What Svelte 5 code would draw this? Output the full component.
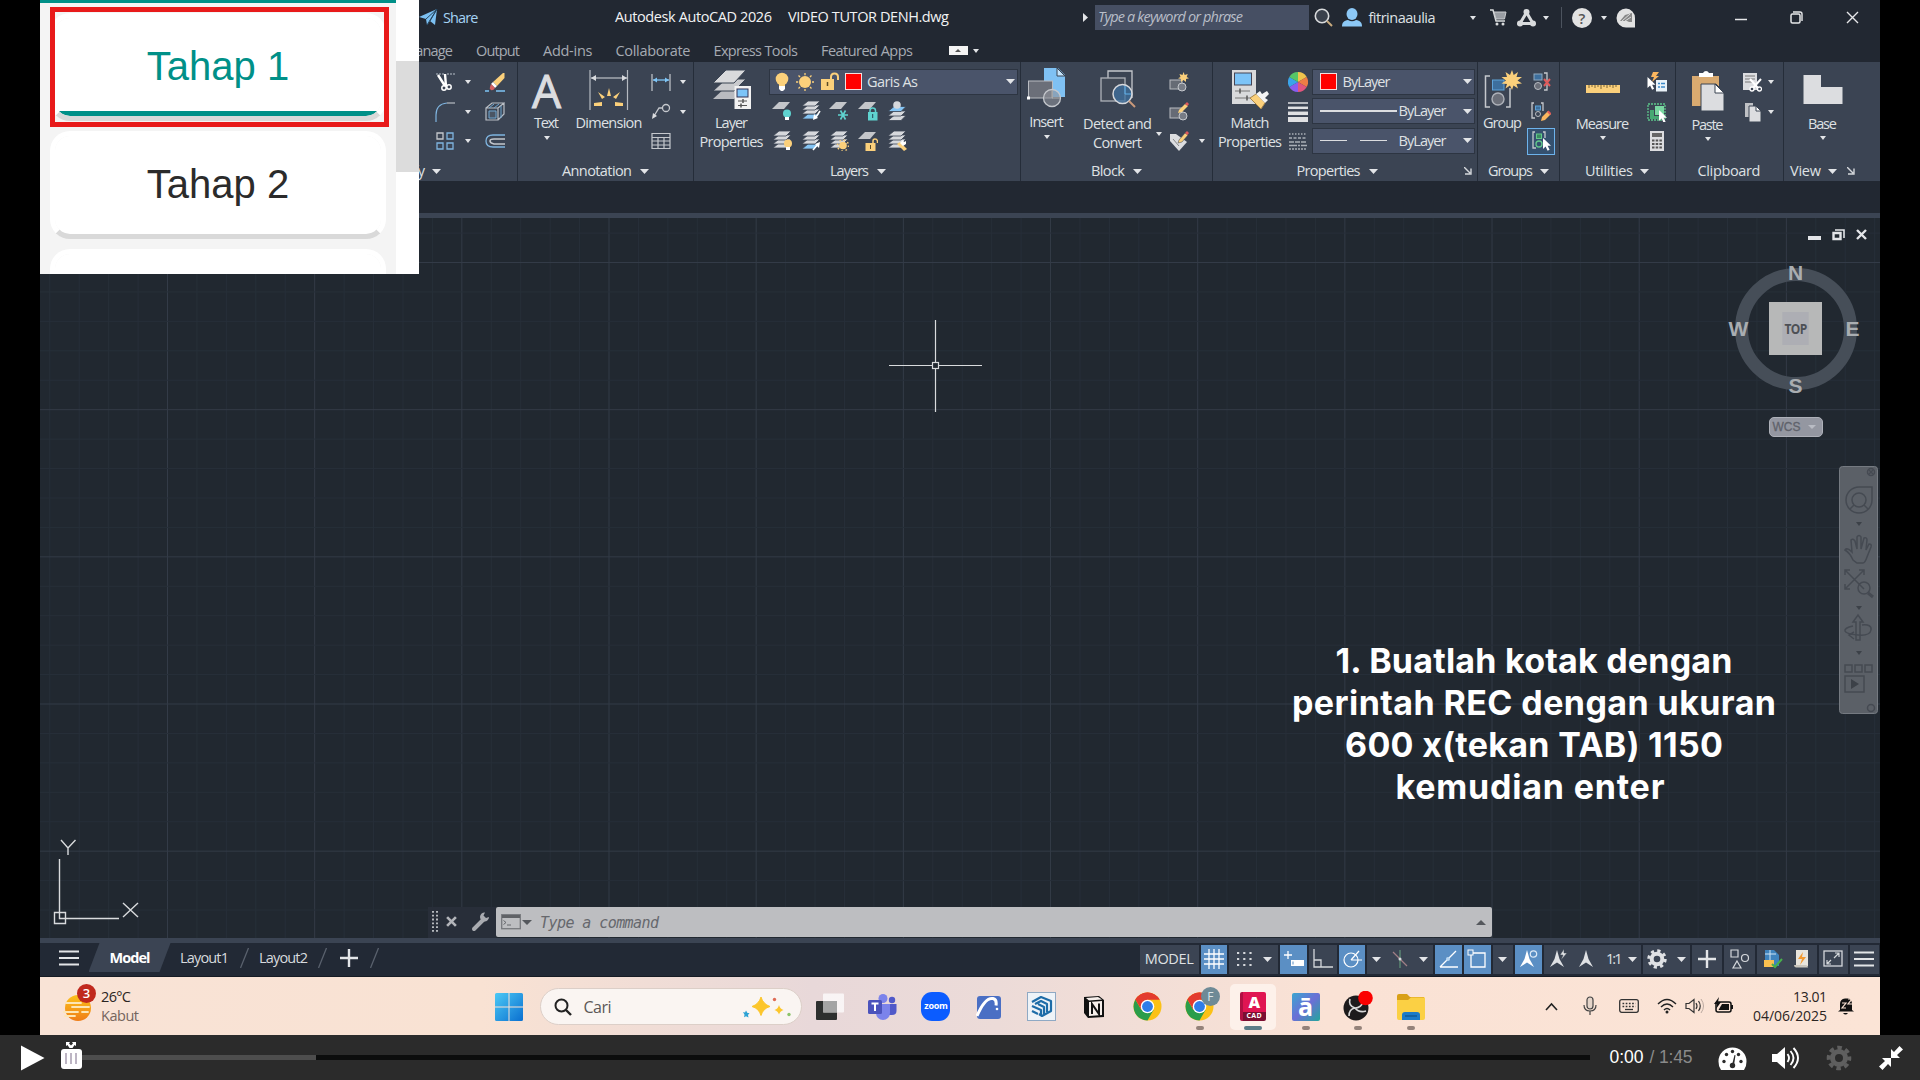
<script>
  // Spreads the letters of a label so that it fills the given width.
  function fit(node, width) {
    const n = node.textContent.length;
    const natural = node.getBoundingClientRect().width;
    const gap = (width - natural) / Math.max(1, n - 1);
    node.style.letterSpacing = gap + 'px';
    node.style.marginRight = -gap + 'px';
  }

  const sheet = (y, c = '#d6d8dc') => `<path d="M7 ${y}h12l-5 5H1z" fill="${c}" stroke="#3b4453" stroke-width=".8"/>`;
  const cursor = (x, y) => `<path d="M${x} ${y}v11l2.6-2.4 2 4.2 2-1-2-4h3.4z" fill="#fff"/>`;
  const mast = 'M9 1L6.5 10L2 18L9 13.5L16 18L11.500 10z';
  const chrome = '<circle cx="14.500" cy="14.500" r="14" fill="#fbc116"/><path d="M14.500 14.500L2.400 7.500A14 14 0 0 1 26.600 7.500H14.500z" fill="#e33b2e"/><path d="M2.400 7.500A14 14 0 0 0 14.500 28.500L20.500 18 8.400 18z" fill="#2a9d4a"/><path d="M14.500 7.500H26.600A14 14 0 0 0 2.400 7.500L8.500 18z" fill="#e33b2e"/><circle cx="14.500" cy="14.500" r="6.800" fill="#fff"/><circle cx="14.500" cy="14.500" r="5.400" fill="#2f7de9"/>';

  // name: [width, height, markup]
  const icons = {
    plane: [19, 17, '<path d="M0 8L18 0 16 16 11 12 8 16 7 10z" fill="#7cc0f2"/><path d="M7 10L18 0 8 16M11 12L18 0" stroke="#25455f" stroke-width="1" fill="none"/>'],
    right: [5, 9, '<path d="M0 0l5 4.500-5 4.500z" fill="#e3e5e8"/>'],
    tri: [6, 4, '<path d="M0 0h6L3 4z" fill="#e3e5e8"/>'],
    big: [9, 5, '<path d="M0 0h9L4.500 5z" fill="#e3e5e8"/>'],
    mag: [19, 19, '<circle cx="8" cy="8" r="6.700" fill="#3a414c" stroke="#d9dbdd" stroke-width="1.600"/><path d="M13 13l5 5" stroke="#c9ab7f" stroke-width="2"/>'],
    user: [20, 19, '<ellipse cx="10" cy="6" rx="5.500" ry="6" fill="#8cc8f6"/><path d="M0 18.500c0-4 2-6 6-6.500q4 2.500 8 0c4 .5 6 2.500 6 6.500z" fill="#8cc8f6"/>'],
    cart: [17, 17, '<path d="M0 1h3l3 11h9" stroke="#d9dbdd" stroke-width="1.500" fill="none"/><path d="M4 3h12l-1.500 7H6z" fill="#9a9ea4" stroke="#c9cbce"/><circle cx="7" cy="15" r="1.500" fill="#d9dbdd"/><circle cx="13" cy="15" r="1.500" fill="#d9dbdd"/>'],
    net: [19, 18, '<path d="M9.500 3.500L3 14.500h13z" fill="none" stroke="#d9dbdd" stroke-width="3"/><circle cx="9.500" cy="3" r="3" fill="#d9dbdd"/><circle cx="3" cy="14.500" r="3" fill="#d9dbdd"/><circle cx="16" cy="14.500" r="3" fill="#d9dbdd"/>'],
    bubble: [20, 20, '<path d="M10 .5a9.500 9.500 0 0 1 9 9.500v9.500h-9a9.500 9.500 0 0 1 0-19z" fill="#e2e2e2"/><path d="M4 13l5-6 7-2v9h-3l-2-1H7z" fill="#888"/><path d="M6 13l8-7M9 13l6-4" stroke="#ddd"/>'],
    min: [12, 14, '<path d="M0 8.500h12" stroke="#e6e7e9" stroke-width="1.500"/>'],
    restore: [13, 13, '<rect x="1" y="3" width="9" height="9" rx="1.500" fill="none" stroke="#e6e7e9" stroke-width="1.500"/><path d="M3 1h7q2 0 2 2v7" fill="none" stroke="#e6e7e9" stroke-width="1.400"/>'],
    close: [13, 13, '<path d="M1 1l11 11M12 1L1 12" stroke="#e6e7e9" stroke-width="1.400"/>'],

    trim: [20, 20, '<path d="M1 2h9M12 2h8" stroke="#8e97a3" stroke-width="1.300" stroke-dasharray="2 1"/><path d="M3 3l7 11M10 2l1 12" stroke="#fff" stroke-width="2.400"/><circle cx="9" cy="16" r="2.200" fill="none" stroke="#fff" stroke-width="1.500"/><circle cx="14" cy="15" r="2.200" fill="none" stroke="#fff" stroke-width="1.500"/>'],
    erase: [20, 20, '<path d="M8 10L18 1h1.500v5L12 14z" fill="#fbd07b"/><path d="M8 10l4 4-2 2-4-4z" fill="#fff"/><path d="M6 12l4 4q-2 3-4 2t-1-3z" fill="#d66060"/><path d="M0 19h4M11 19h9" stroke="#7fc4f5" stroke-width="1.300"/>'],
    fillet: [20, 20, '<path d="M1 20V13Q1 2 12 1" fill="none" stroke="#7fb4df" stroke-width="1.200"/><path d="M12 1h8" stroke="#b9bec5" stroke-width="1.200"/>'],
    cube: [20, 20, '<path d="M1 6h12v12H1zM1 6l6-5h12l-6 5M19 1v11l-6 6" fill="none" stroke="#b9bec5" stroke-width="1.200"/><path d="M4 6l5-4M9 6l5-4M16 4v12" stroke="#6fa6d0"/><path d="M4 9h7v7H4z" fill="#4a5564" stroke="#6fa6d0"/>'],
    array: [20, 20, '<path d="M2 2h6v6H2z" fill="none" stroke="#c5c8cd" stroke-width="1.300"/><path d="M12 2h6v6h-6zM2 12h6v6H2zM12 12h6v6h-6z" fill="none" stroke="#7fb4df" stroke-width="1.300"/>'],
    offset: [20, 20, '<path d="M20 4H8Q1 4 1 10t7 6h12" fill="none" stroke="#7fb4df" stroke-width="1.300"/><path d="M20 8H9Q5 8 5 10t4 3h11" fill="none" stroke="#c5c8cd" stroke-width="1.500"/>'],
    dim: [40, 40, '<path d="M1 0v40M38.500 0v40" stroke="#b5bac1" stroke-width="1.200"/><path d="M2 8h36" stroke="#d8dade" stroke-width="1.200"/><path d="M2 8l5-3v6zM38 8l-5-3v6z" fill="#d8dade"/><g fill="#fbd07b"><path d="M20 18l2 8h-4zM9 22l7 5-3 2zM31 22l-7 5 3 2zM5 33l8-1v4H5zM34 33l-8-1v4h8z"/></g>'],
    linear: [20, 20, '<path d="M1 2v17M19 2v17" stroke="#c5c8cd" stroke-width="1.200"/><path d="M2 8h16" stroke="#7fc4f5" stroke-width="1.300"/><path d="M2 8l4-2.500v5zM18 8l-4-2.500v5z" fill="#7fc4f5"/>'],
    leader: [20, 20, '<circle cx="15" cy="6" r="3.500" fill="none" stroke="#c5c8cd" stroke-width="1.300"/><path d="M11 6H8l-5 8" fill="none" stroke="#c5c8cd" stroke-width="1.300"/><path d="M1 17l1-6 4 3z" fill="#dcdde0"/>'],
    table: [20, 20, '<path d="M1 2.500h18v15H1zM1 6.500h18M1 10h18M1 14h18M7 6v12M13 6v12" fill="none" stroke="#c5c8cd" stroke-width="1.200"/>'],
    layerprops: [40, 40, '<path d="M14 17h20l-12 12H1z" fill="#b9bbc0"/><path d="M14 9h20L22 21H1z" fill="#c9cacd" stroke="#3b4453"/><path d="M14 0h20L22 13H1z" fill="#d9dadc" stroke="#3b4453"/><rect x="22.500" y="16" width="16.500" height="23" fill="#f2f2f2"/><rect x="25" y="19" width="11" height="8" fill="#7cc4f8" stroke="#335"/><path d="M26 31h9M26 35.500h9" stroke="#555"/><path d="M31 29v4M29 33.500v4" stroke="#555" stroke-width="1.500"/>'],
    bulb: [14, 20, '<circle cx="7" cy="7" r="6.300" fill="#fbd07b"/><path d="M4 11h6v3H4z" fill="#fbd07b"/><path d="M4 14h6v3l-2 2H6l-2-2z" fill="#fff"/>'],
    sun: [20, 20, '<circle cx="10" cy="10" r="6" fill="#fbd07b"/><path d="M10 1v18M1 10h18M3.500 3.500l13 13M16.500 3.500l-13 13" stroke="#fbd07b" stroke-width="1.300" stroke-dasharray="2.200 50"/><path d="M10 19v-2M19 10h-2M16.500 16.500l-1.500-1.500M3.500 16.500L5 15" stroke="#fbd07b" stroke-width="1.300"/>'],
    lock: [19, 20, '<rect x="1" y="7" width="13" height="11" fill="#fbd07b"/><path d="M11 8V5q0-3.500 3.500-3.500T18 5v3" fill="none" stroke="#fbd07b" stroke-width="2"/><path d="M7.500 10v4" stroke="#5c4b25" stroke-width="1.500"/>'],
    l1: [20, 20, '<path d="M7 1h11l-6 7H0z" fill="#c4c6ca"/><circle cx="15" cy="12.500" r="4" fill="#5fd3d0"/><path d="M13 16h4v3h-4z" fill="#fff"/>'],
    l2: [20, 20, sheet(13, '#85c5f5') + sheet(8) + sheet(4) + sheet(0) + '<path d="M19 10l-4 6" stroke="#fff" stroke-width="1.500"/><path d="M12 19l1-6 4 4z" fill="#fff"/>'],
    l3: [20, 20, '<path d="M7 1h11l-6 7H0z" fill="#c4c6ca"/><path d="M9 14h10M11.500 9.500l5 9M16.500 9.500l-5 9" stroke="#5fd3d0" stroke-width="1.600"/>'],
    l4: [20, 20, '<path d="M7 1h11l-6 7H0z" fill="#c4c6ca"/><rect x="10" y="11" width="9.500" height="8.500" fill="#5fd3d0"/><path d="M12 11V9.500q0-2.500 2.700-2.500t2.800 2.500V11" fill="none" stroke="#5fd3d0" stroke-width="1.500"/><path d="M14.700 13v4" stroke="#245"/>'],
    l5: [20, 20, sheet(14.5) + sheet(10) + sheet(5.5, '#85c5f5') + '<circle cx="10" cy="4" r="3.800" fill="#d6d8dc"/>'],
    l6: [20, 20, sheet(12) + sheet(8) + sheet(4) + sheet(0) + '<circle cx="16" cy="12.500" r="4" fill="#fbd07b"/><path d="M14 16h4v3h-4z" fill="#fff"/>'],
    l7: [20, 20, sheet(13, '#85c5f5') + sheet(8) + sheet(4) + sheet(0) + '<path d="M12 19l5-6" stroke="#fff" stroke-width="1.500"/><path d="M19 11l-1 6-4-4z" fill="#fff"/>'],
    l8: [20, 20, sheet(12) + sheet(8) + sheet(4) + sheet(0) + '<circle cx="14" cy="14.500" r="3.800" fill="#fbd07b"/><circle cx="14" cy="14.500" r="5.500" fill="none" stroke="#fbd07b" stroke-width="1.500" stroke-dasharray="1.500 2.800"/>'],
    l9: [20, 20, '<path d="M7 1h11l-6 7H0z" fill="#c4c6ca"/><rect x="7.500" y="12" width="10" height="8" fill="#fbd07b"/><path d="M15 12v-2q0-2 2-2t2.500 2v2" fill="none" stroke="#fbd07b" stroke-width="1.500"/><path d="M12.500 14v4" stroke="#5c4b25"/>'],
    l10: [20, 20, sheet(12) + sheet(8) + sheet(4) + sheet(0) + '<path d="M10 13l3-2 7 7-3 2z" fill="#fbd07b"/><path d="M13 12l3-3 1 2 2-1v3l-3 2z" fill="#fff"/>'],
    insert: [40, 40, '<path d="M17 0h14l7 7v22H17z" fill="#7fc1f3"/><path d="M30 0l8 8h-8z" fill="#c4e4fb" stroke="#3b4453"/><rect x="1.500" y="13" width="24" height="17" fill="#6b6f79" stroke="#b9bcc1"/><circle cx="25" cy="30" r="8.500" fill="#8d9199" fill-opacity=".6" stroke="#c5c8cd" stroke-width="1.300"/><path d="M25 22v8h8" stroke="#aaa" fill="none"/><rect x="0" y="28.500" width="3" height="3" fill="#fff"/>'],
    detect: [36, 40, '<path d="M8 8V1h24v27" fill="none" stroke="#c5c8cd" stroke-width="1.300"/><rect x="1" y="8" width="24" height="23" fill="#424a57" stroke="#aeb2b9" stroke-width="1.300"/><circle cx="22.500" cy="24" r="9.500" fill="#3d6f9d" fill-opacity=".75" stroke="#d6d8dc" stroke-width="1.500"/><path d="M25 16v8h6" stroke="#5fb0ea" fill="none"/><path d="M29 31l6 6" stroke="#c9997a" stroke-width="2"/>'],
    b1: [20, 20, '<rect x="1" y="8" width="12" height="9" fill="#666b75" stroke="#b9bcc1"/><circle cx="13" cy="15" r="4" fill="#777c86" stroke="#c5c8cd"/><path d="M14.500 0l1.200 3 3-1-1 3 2.300 1.200-3 .8 0 3-2.500-2-2.500 2v-3l-3-.8 2.500-1.200-1-3 3 1z" fill="#fbd07b"/>'],
    b2: [20, 20, '<rect x="1" y="6" width="12" height="10" fill="#666b75" stroke="#b9bcc1"/><circle cx="14" cy="14" r="4" fill="#777c86" stroke="#c5c8cd"/><path d="M9 11l1-3 6-6 3 2-6 6z" fill="#fbd07b"/><path d="M16 2l2-2 2 2-1.500 2z" fill="#e05a5a"/>'],
    b3: [20, 20, '<path d="M1 3h6l11 8-8 9-9-10z" fill="#dcdde0"/><path d="M4 8l6 7" stroke="#888"/><path d="M9 12l1-3 6-7 3 2-6 7z" fill="#fbd07b" stroke="#3b4453" stroke-width=".5"/><path d="M16 2l2-2 2 2-1.500 2z" fill="#e05a5a"/>'],
    match: [40, 40, '<path d="M2 0h24v34H2z" fill="#d9dadc"/><rect x="4.500" y="3" width="17" height="12" fill="#7cc4f8" stroke="#445"/><path d="M5 21h15M5 28h15" stroke="#777"/><path d="M10 18.500v5M17 25.500v5" stroke="#555" stroke-width="1.500"/><path d="M20 28l6-4 9 9-4 6z" fill="#fbd07b" stroke="#a8854a"/><path d="M26 24l4-3 2 3 5-3 2 3-4 4 3 2-3 3z" fill="#f4f4f4"/>'],
    wheel: [20, 20, '<path d="M10 10V0A10 10 0 0 1 18.700 5z" fill="#f0c44c"/><path d="M10 10L18.700 5A10 10 0 0 1 18.700 15z" fill="#ef7d45"/><path d="M10 10L18.700 15A10 10 0 0 1 10 20z" fill="#e2557d"/><path d="M10 10V20A10 10 0 0 1 1.300 15z" fill="#8b5cf0"/><path d="M10 10L1.300 15A10 10 0 0 1 1.300 5z" fill="#3ba4ea"/><path d="M10 10L1.300 5A10 10 0 0 1 10 0z" fill="#57c566"/>'],
    weights: [20, 20, '<path d="M0 1h20" stroke="#e0e1e3" stroke-width="1.500"/><path d="M0 5.800h20" stroke="#e0e1e3" stroke-width="2.500"/><path d="M0 11.300h20" stroke="#e0e1e3" stroke-width="3.500"/><path d="M0 17.500h20" stroke="#e0e1e3" stroke-width="5"/>'],
    types: [20, 20, '<g stroke="#a9aeb6" stroke-width="1.300"><path d="M1 3h18" stroke-dasharray="1.500 1.500"/><path d="M1 7h18" stroke-dasharray="3 1.500"/><path d="M1 11h18" stroke-dasharray="5 1"/><path d="M1 14.500h18" stroke-dasharray="8 1 2 1"/><path d="M1 18h18" stroke-dasharray="2 1"/></g>'],
    group: [38, 40, '<path d="M6 6H1.500v31H6M22 37h4V18" fill="none" stroke="#c5c8cd" stroke-width="1.500"/><rect x="8.500" y="10" width="11.500" height="10" fill="#3d6f9d" stroke="#5fa3d8"/><circle cx="14" cy="29" r="6" fill="#6b6f79" stroke="#aeb2b9" stroke-width="1.400"/><path d="M28 0l1.700 5 4.300-3-1.500 5 5.500 0-4.500 3.500 4.500 3-5.500.5 1.500 4.500-4.500-3L28 20l-2-4.500-4.500 3 1.500-4.500-5.500-.5 4.500-3-4.500-3.500 5.500 0-1.500-5 4.500 3z" fill="#fbd07b"/>'],
    g1: [20, 20, '<rect x="3" y="2" width="8" height="6" fill="#3d6f9d" stroke="#8fa9c0"/><circle cx="7" cy="14" r="3.500" fill="#6b6f79" stroke="#b9bcc1"/><path d="M13 1h3v17h-3" fill="none" stroke="#c5c8cd" stroke-width="1.300"/><path d="M13 7l6 7M19 7l-6 7" stroke="#e05a5a" stroke-width="2"/>'],
    g2: [20, 20, '<path d="M3 1H1v15h3M10 1h2v8" fill="none" stroke="#c5c8cd" stroke-width="1.300"/><rect x="4.500" y="4" width="5" height="4" fill="#3d6f9d" stroke="#5fa3d8"/><circle cx="7" cy="12" r="2.500" fill="none" stroke="#b9bcc1"/><path d="M10 19l1-4 6-6 3 3-6 6z" fill="#fbb65f"/><path d="M16 10l1.500-1.500 3 3L19 13z" fill="#e05a5a"/>'],
    g3: [20, 20, '<path d="M4 1H2v16h3M12 1h2v6" fill="none" stroke="#c5c8cd" stroke-width="1.300"/><rect x="5.500" y="3" width="5" height="4.500" fill="#3b8a60" stroke="#62c98c"/><circle cx="8" cy="13" r="3" fill="none" stroke="#62c98c" stroke-width="1.300"/>' + cursor(12, 7)],
    ruler: [36, 40, '<path d="M1 15h34v8H1z" fill="#fbd07b"/><path d="M4 15v3M7 15v2M10 15v3M13 15v2M16 15v4M19 15v2M22 15v3M25 15v2M28 15v3M31 15v2" stroke="#7d6636" stroke-width="1"/>'],
    u1: [20, 20, '<rect x="9" y="8" width="11" height="11.500" fill="#e9f2f8"/><path d="M11 11.500h2M14 11.500h4M11 15h2M14 15h4" stroke="#3c8ac8" stroke-width="1.500"/><path d="M6 0h6L9 4h3L5 10l2-5H4z" fill="#fbb65f"/>' + cursor(0.5, 5)],
    u2: [20, 20, '<path d="M1 2h17v16H1z" fill="none" stroke="#5cc58a" stroke-width="1.300" stroke-dasharray="2 1"/><path d="M8 4h9v9H8z" fill="#79d7a1"/><path d="M3 8h4v6h6v3H3z" fill="#47a873"/>' + cursor(12, 8)],
    calc: [16, 20, '<rect x="1" y="0" width="14" height="20" fill="#dcdde0"/><rect x="3" y="2" width="10" height="4" fill="#666"/><path d="M3 9.500h10M3 13h10M3 16.500h10" stroke="#555" stroke-width="2" stroke-dasharray="2.500 1.200"/>'],
    paste: [34, 40, '<rect x="1" y="5" width="27" height="30" fill="#d9aa70"/><path d="M8 2h4q1-2 3-2t3 2h4v4H8z" fill="#fff"/><path d="M10 13h15l8 8v19H10z" fill="#dcdde0" stroke="#3b4453"/><path d="M24 13v9h9z" fill="#fff" stroke="#3b4453"/>'],
    c1: [20, 20, '<path d="M1 1h14v17H1z" fill="#dcdde0"/><path d="M3 4h10M3 7h10M3 10h8" stroke="#777"/><path d="M8 7l8 9M19 7l-8 9" stroke="#fff" stroke-width="2"/><circle cx="10" cy="17" r="2" fill="#3b4453" stroke="#fff" stroke-width="1.300"/><circle cx="17.500" cy="17" r="2" fill="#3b4453" stroke="#fff" stroke-width="1.300"/>'],
    c2: [20, 20, '<path d="M3 1h8v14H3z" fill="#bfc1c5"/><path d="M7 4h8l4 4v12H7z" fill="#dcdde0" stroke="#3b4453"/><path d="M14 4v5h5z" fill="#fff" stroke="#3b4453"/>'],
    base: [40, 40, '<path d="M.5 2H18v12h21.500v17H.5z" fill="#dcdde0"/>'],
    launch: [8, 8, '<path d="M0 0l6 6M7 1.500V7H1" fill="none" stroke="#d5d8dc" stroke-width="1.400"/>'],

    wrench: [20, 20, '<path d="M3 17L12 8" stroke="#a9abb0" stroke-width="4" stroke-linecap="round"/><path d="M18 5a4.500 4.500 0 1 1-4-4.500L12.500 3.500 15 6z" fill="#a9abb0"/>'],
    term: [20, 16, '<rect x=".7" y=".7" width="18.600" height="14" fill="none" stroke="#77797d" stroke-width="1.300"/><path d="M1 1h18v3H1z" fill="#606266"/><path d="M2.500 6.500L5 8.500 2.500 10.500M6 11h4" fill="none" stroke="#66686c"/>'],
    menu: [20, 16, '<path d="M0 1.500h20M0 8h20M0 14.500h20" stroke="#e3e5e8" stroke-width="2"/>'],
    plus: [18, 18, '<path d="M9 0v18M0 9h18" stroke="#e3e5e8" stroke-width="2.400"/>'],
    slash: [9, 20, '<path d="M8.500 0L.5 20" stroke="#59616d" stroke-width="1.300"/>'],
    grid: [20, 20, '<path d="M5 0v20M10 0v20M15 0v20M0 5h20M0 10h20M0 15h20" stroke="#fff" stroke-width="1.300"/>'],
    dots: [18, 18, '<path d="M2 3h15M2 9h15M2 15h15" stroke="#d5d8dc" stroke-width="2.200" stroke-dasharray="2.200 4"/>'],
    dyn: [20, 20, '<path d="M4 2v8M0 6h8" stroke="#fff" stroke-width="1.300"/><path d="M7 11h13v6H7z" fill="#fff"/><path d="M9 12.500v3" stroke="#5b8fc4"/>'],
    ortho: [20, 20, '<path d="M1 0v18h19M1 11h7v7" fill="none" stroke="#d5d8dc" stroke-width="1.300"/>'],
    polar: [20, 20, '<circle cx="9" cy="11" r="7" fill="none" stroke="#fff" stroke-width="1.200"/><path d="M9 11h11M9 11l8-9" stroke="#fff" stroke-width="1.200"/>'],
    iso: [16, 20, '<path d="M8 1v18" stroke="#5f8f76" stroke-width="1.300"/><path d="M1 3l14 14" stroke="#a07f86" stroke-width="1.200"/><circle cx="8" cy="10" r="1.500" fill="#d5d8dc"/>'],
    track: [20, 20, '<path d="M1 18L17 2M1 18h18" stroke="#fff" stroke-width="1.300"/><circle cx="9" cy="10" r="2" fill="#b9d7f3"/>'],
    osnap: [20, 20, '<path d="M4 4h14v14H4z" fill="none" stroke="#fff" stroke-width="1.300"/><rect x="1" y="1" width="5" height="5" fill="#5b8fc4" stroke="#fff"/>'],
    ann1: [20, 20, `<path d="${mast}" fill="#fff"/><circle cx="15.500" cy="5" r="3.200" fill="none" stroke="#dce9f6" stroke-width="1.200"/>`],
    ann2: [20, 20, `<path d="${mast}" fill="#dfe1e4"/><path d="M16 0l-4 6h3l-2 5 6-7h-3z" fill="#dfe1e4" stroke="#3b4453" stroke-width=".5"/>`],
    ann3: [20, 20, `<path d="${mast}" fill="#dfe1e4"/>`],
    gear: [20, 20, '<circle cx="10" cy="10" r="5.300" fill="none" stroke="#dfe1e4" stroke-width="4"/><circle cx="10" cy="10" r="8.200" fill="none" stroke="#dfe1e4" stroke-width="3" stroke-dasharray="3.200 3.240"/>'],
    shapes: [20, 20, '<g fill="none" stroke="#d5d8dc" stroke-width="1.200"><path d="M1 1h7v7H1zM7 12l4 7H3z"/><circle cx="15" cy="9" r="3.500"/></g>'],
    model: [20, 20, '<path d="M2 1h9l5 5v11H2z" fill="#3f83bd"/><path d="M2 5h11M7 1v16" stroke="#cfe4f5"/><path d="M1 11h10v7H1z" fill="#fbc04f"/><path d="M9 15l3 3 7-8" stroke="#48b14c" stroke-width="2" fill="none"/>'],
    bolt: [18, 20, '<path d="M3 1h12v16H3z" fill="#e8e4dc"/><path d="M1 16h12q2 0 2 2.500H3Q1 18 1 16z" fill="#c9c5bd"/><path d="M10 3L5 10h4l-2 6 6-8H9z" fill="#f39a31"/>'],
    full: [20, 20, '<rect x="1" y="2" width="18" height="15" fill="none" stroke="#d5d8dc" stroke-width="1.300"/><path d="M11 9l5-5m-4 0h4v4M8 11l-4 4m0-4v4h4" stroke="#d5d8dc" fill="none" stroke-width="1.200"/>'],

    weather: [30, 32, '<defs><linearGradient id="sunset" x2="0" y2="1"><stop offset="0" stop-color="#fcc21b"/><stop offset="1" stop-color="#ef7d17"/></linearGradient></defs><circle cx="15" cy="18" r="13" fill="url(#sunset)"/><path d="M3 13h15M9 17h17M1 22h14M19 22h6M2 26h10" stroke="#fde6b5" stroke-width="1.800" stroke-linecap="round"/>'],
    win: [28, 28, '<defs><linearGradient id="win" x2="1" y2="1"><stop offset="0" stop-color="#4cc9f5"/><stop offset="1" stop-color="#0a6fd0"/></linearGradient></defs><path d="M0 1.500Q0 0 1.500 0H13.500v13.500H0zM14.500 0H26.500Q28 0 28 1.500v12H14.500zM0 14.500h13.500V28H1.500Q0 28 0 26.500zM14.500 14.500H28v12q0 1.500-1.500 1.500h-12z" fill="url(#win)"/>'],
    find: [18, 18, '<circle cx="7.500" cy="7.500" r="6" fill="none" stroke="#222" stroke-width="2"/><path d="M12 12l5 5" stroke="#222" stroke-width="2.400"/>'],
    sparks: [50, 22, '<path d="M19 1q2 7 9 9.500-7 2-9 9-2-7-9-9 7-2.500 9-9.500z" fill="#fcc62b" stroke="#fcc62b" stroke-linejoin="round"/><path d="M37 9q1 4 4.500 5-3.500 1-4.500 4.500-1-3.500-4.500-4.500 3.500-1 4.500-5z" fill="#fcc62b"/><path d="M1 16l2 .5 1-2 1.500 2.500 2 0-1.500 2 .5 2.500-2.500-1.200-2 1 .5-2.500z" fill="#2ea3d5"/><circle cx="32.500" cy="3.500" r="1.700" fill="#df6b55"/><circle cx="47" cy="18.500" r="1.700" fill="#8cc46b"/>'],
    task: [30, 30, '<rect x="1" y="9" width="21" height="19" rx="1" fill="#2d2f2e"/><rect x="8" y="1.500" width="21" height="19" rx="1" fill="#fff" fill-opacity=".72"/><rect x="8" y="9" width="14" height="11.500" fill="#a4a4a4"/>'],
    teams: [30, 28, '<circle cx="15" cy="5.500" r="4.500" fill="#7b83eb"/><circle cx="24" cy="7" r="3.200" fill="#5059c9"/><path d="M20 11h8.500v7q0 4-4.500 4h-4z" fill="#5059c9"/><path d="M8 11h14v9a7 7 0 0 1-14 0z" fill="#7b83eb"/><rect x="0" y="7" width="14" height="14" rx="1.500" fill="#4b53bc"/><path d="M3.500 10.500h7M7 10.500v7.500" stroke="#fff" stroke-width="2"/>'],
    arc: [26, 26, '<rect x="1" y="2" width="24" height="23" rx="3" fill="#4a6fc4"/><path d="M1 22Q9 3 17 4.500q4 1 3 7" stroke="#fff" stroke-width="3" fill="none"/><circle cx="21" cy="15" r="1.300" fill="#fff"/>'],
    sketch: [29, 29, '<rect x=".5" y=".5" width="28" height="28" fill="#eef3f8" stroke="#8fa9c4"/><g fill="none" stroke="#1d6ca8" stroke-width="2.200" stroke-linejoin="round"><path d="M5 10l9-5 10 4v10l-9 5-3-2"/><path d="M8 12l6-3 6 3v8M5 14l9 4v5M5 19l6 3M11 12l6 3v7"/></g>'],
    notion: [22, 22, '<path d="M1 1L16 0l5 4v17L5 22 1 17z" fill="#111"/><path d="M6 6l13-1v14L6 20z" fill="#f6efeb"/><path d="M9 18V8l7 10V7.500" stroke="#111" stroke-width="2" fill="none"/><path d="M3 2l12-1 4 2.500L6 4.500z" fill="#f6efeb"/>'],
    chrome: [29, 29, chrome],
    obs: [32, 32, '<circle cx="14" cy="17" r="12.500" fill="#1d1b1c"/><path d="M8 8q-2 7 5 9 6 0 8-6M13 17q-6 1-6 8M13 17q4 5 11 3" stroke="#d9d9d9" stroke-width="1.600" fill="none"/><circle cx="23.500" cy="7" r="7.300" fill="#fb0100"/>'],
    folder: [30, 28, '<path d="M1 3q0-2 2-2h8l3 3h14v8H1z" fill="#d9a017"/><path d="M1 7h11l3-2.500h14V25q0 2-2 2H3q-2 0-2-2z" fill="#fbd044"/><path d="M6 27v-5q0-3 3-3h12q3 0 3 3v5z" fill="#1b7bc9"/><path d="M9 23h12" stroke="#125a96" stroke-width="1.500"/>'],
    up: [13, 9, '<path d="M1 8l5.500-6L12 8" fill="none" stroke="#222" stroke-width="1.600"/>'],
    mic: [14, 20, '<rect x="4" y="1" width="6" height="12" rx="3" fill="#e5d5ca" stroke="#444" stroke-width="1.200"/><path d="M1 9q0 6 6 6t6-6M7 15v4" fill="none" stroke="#444" stroke-width="1.200"/>'],
    kb: [20, 14, '<rect x=".7" y=".7" width="18.600" height="12.600" rx="2" fill="none" stroke="#333" stroke-width="1.300"/><path d="M3.500 4.500h13M3.500 7.500h13" stroke="#333" stroke-width="1.400" stroke-dasharray="1.700 1.500"/><path d="M6 10.500h8" stroke="#333" stroke-width="1.300"/>'],
    wifi: [20, 16, '<g fill="none" stroke="#222" stroke-width="1.400"><path d="M1 6q9-9 18 0M4 9q6-6 12 0M7 12q3-3 6 0"/></g><circle cx="10" cy="14" r="1.500" fill="#222"/>'],
    vol: [20, 16, '<path d="M1 5.500h3l5-4v13l-5-4H1z" fill="none" stroke="#333" stroke-width="1.200"/><path d="M11 5q2 3 0 6M13.500 3q3.500 5 0 10" fill="none" stroke="#333" stroke-width="1.200"/><path d="M16 1q5 7 0 14" fill="none" stroke="#bba9a0"/>'],
    batt: [20, 18, '<rect x="2" y="5" width="15" height="10" rx="2" fill="none" stroke="#111" stroke-width="1.500"/><path d="M8 7h7v6H4.500z" fill="#111"/><path d="M18 8v4" stroke="#111" stroke-width="2"/><path d="M5 0L0 7h3l-1 5 5-7H4z" fill="#111"/>'],
    bell: [18, 18, '<path d="M3 13V7q0-5 5-5.500h4q3 1.500 3 5.500v6l2 1.500H1z" fill="#111"/><path d="M6 16q2.500 3 5 0z" fill="#111"/><path d="M5 6h4l-4 5h4M11 2h4l-4 5h4" fill="none" stroke="#fbe3d5" stroke-width="1.200"/>'],
    play: [24, 26, '<path d="M0 .5L23.500 13 0 25.500z" fill="#fff"/>'],
    gauge: [29, 24, '<path d="M3 23A14 14 0 0 1 .5 14.500 14 14 0 0 1 28.500 14.500 14 14 0 0 1 26 23z" fill="#fff"/><g fill="#2b2b2b"><circle cx="6" cy="14.500" r="1.700"/><circle cx="8.500" cy="7.500" r="1.700"/><circle cx="14.500" cy="4.500" r="1.700"/><circle cx="20.500" cy="7.500" r="1.700"/><circle cx="23" cy="14.500" r="1.700"/><circle cx="14.500" cy="18.500" r="2.700"/><path d="M14 18l2.500-10 1 .3-1.500 10z"/></g>'],
    sound: [28, 24, '<path d="M0 8h5l8-7v22l-8-7H0z" fill="#fff"/><path d="M15.500 8q3 4 0 8M18.500 5q6 7 0 14M21.500 2q9 10 0 20" fill="none" stroke="#fff" stroke-width="1.900"/>'],
    cog: [26, 26, '<circle cx="13" cy="13" r="6.500" fill="none" stroke="#5f5f5f" stroke-width="5"/><circle cx="13" cy="13" r="10.300" fill="none" stroke="#5f5f5f" stroke-width="4" stroke-dasharray="4.500 3.590" stroke-dashoffset="2"/>'],
    shrink: [24, 24, '<path d="M12 12V3l3 3 5.500-6L24 3.500 18 9l3 3zM12 12v9l-3-3-5.500 6L0 20.500 6 15l-3-3z" fill="#fff"/>'],
  };

  const tabs = [['Manage', 50], ['Output', 44], ['Add-ins', 49.5], ['Collaborate', 75], ['Express Tools', 84.5], ['Featured Apps', 92]];
  const note = [['1. Buatlah kotak dengan', 397], ['perintah REC dengan ukuran', 484], ['600 x(tekan TAB) 1150', 378], ['kemudian enter', 269]];

  // Drawing area: minor lines every fifth of a major square.
  const pitch = 147.17;
  const vert = Array.from({ length: 64 }, (_, i) => ({ p: 127.5 - pitch + (i * pitch) / 5, major: i % 5 === 0 }));
  const horz = Array.from({ length: 30 }, (_, i) => ({ p: 44.5 - pitch + (i * pitch) / 5, major: i % 5 === 0 }));
</script>

{#snippet ico(name)}
  {@const [w, h, body] = icons[name]}
  <svg class="ico" width={w} height={h} viewBox="0 0 {w} {h}">{@html body}</svg>
{/snippet}

{#snippet foot(text, width, arrow = true, launch = false)}
  <div class="foot">
    <span use:fit={width}>{text}</span>
    {#if arrow}{@render ico('big')}{/if}
    {#if launch}<i class="launch">{@render ico('launch')}</i>{/if}
  </div>
{/snippet}

{#snippet bigButton(icon, lines, arrow = false)}
  <div class="bigbtn {icon}">
    <div class="pic">{@render ico(icon)}</div>
    {#each lines as [text, width]}<div class="line"><span use:fit={width}>{text}</span></div>{/each}
    {#if arrow}{@render ico('tri')}{/if}
  </div>
{/snippet}

{#snippet minis(names, on = 'none')}
  <div class="minis">
    {#each names as n}<div class="mini" class:on={n === on}>{#if n}{@render ico(n)}{/if}</div>{/each}
  </div>
{/snippet}

<div class="screen">
  <div class="app">
    <header class="title">
      {@render ico('plane')}
      <span class="share" use:fit={35.5}>Share</span>
      <span class="bright" use:fit={157}>Autodesk AutoCAD 2026</span>
      <span class="bright" use:fit={161}>VIDEO TUTOR DENH.dwg</span>
      {@render ico('right')}
      <div class="search"><span use:fit={145}>Type a keyword or phrase</span></div>
      {@render ico('mag')}
      {@render ico('user')}
      <span use:fit={67}>fitrinaaulia</span>
      {@render ico('tri')}
      {@render ico('cart')}
      {@render ico('net')}
      {@render ico('tri')}
      <i class="rule"></i>
      <b class="help">?</b>
      {@render ico('tri')}
      {@render ico('bubble')}
      {@render ico('min')}
      {@render ico('restore')}
      {@render ico('close')}
    </header>

    <nav class="tabs">
      {#each tabs as [t, w]}<span use:fit={w}>{t}</span>{/each}
      <i class="toggle"></i>
      {@render ico('tri')}
    </nav>

    <section class="ribbon">
      <div class="panel modify">
        <div class="body">
          {@render minis(['trim', 'fillet', 'array'])}
          {@render minis(['tri', 'tri', 'tri'])}
          {@render minis(['erase', 'cube', 'offset'])}
        </div>
        {@render foot('Modify', 43)}
      </div>
      <div class="panel annotation">
        <div class="body">
          <div class="bigbtn letter">
            <div class="pic">A</div>
            <div class="line"><span use:fit={25}>Text</span></div>
            {@render ico('tri')}
          </div>
          {@render bigButton('dim', [['Dimension', 67]])}
          {@render minis(['linear', 'leader', 'table'])}
          {@render minis(['tri', 'tri', ''])}
        </div>
        {@render foot('Annotation', 70)}
      </div>
      <div class="panel layers">
        <div class="body">
          {@render bigButton('layerprops', [['Layer', 33], ['Properties', 64]])}
          <div class="layerside">
            <div class="combo">
              {@render ico('bulb')}{@render ico('sun')}{@render ico('lock')}
              <i class="red"></i><span use:fit={51}>Garis As</span><em></em>{@render ico('big')}
            </div>
            <div class="tools">
              {#each ['l1', 'l2', 'l3', 'l4', 'l5', 'l6', 'l7', 'l8', 'l9', 'l10'] as n}{@render ico(n)}{/each}
            </div>
          </div>
        </div>
        {@render foot('Layers', 39)}
      </div>
      <div class="panel block">
        <div class="body">
          {@render bigButton('insert', [['Insert', 34.5]], true)}
          {@render bigButton('detect', [['Detect and', 69], ['Convert', 49]])}
          <div class="side-arrow">{@render ico('tri')}</div>
          {@render minis(['b1', 'b2', 'b3'])}
          {@render minis(['', '', 'tri'])}
        </div>
        {@render foot('Block', 34)}
      </div>
      <div class="panel props">
        <div class="body">
          {@render bigButton('match', [['Match', 39], ['Properties', 64]])}
          {@render minis(['wheel', 'weights', 'types'])}
          <div class="combos">
            <div class="combo"><i class="red"></i><span use:fit={48}>ByLayer</span><em></em>{@render ico('big')}</div>
            <div class="combo"><u></u><span use:fit={48}>ByLayer</span><em></em>{@render ico('big')}</div>
            <div class="combo"><u class="dash"></u><span use:fit={48}>ByLayer</span><em></em>{@render ico('big')}</div>
          </div>
        </div>
        {@render foot('Properties', 64, true, true)}
      </div>
      <div class="panel groups">
        <div class="body">
          {@render bigButton('group', [['Group', 39]])}
          {@render minis(['g1', 'g2', 'g3'], 'g3')}
        </div>
        {@render foot('Groups', 45)}
      </div>
      <div class="panel utils">
        <div class="body">
          {@render bigButton('ruler', [['Measure', 53.5]], true)}
          {@render minis(['u1', 'u2', 'calc'])}
        </div>
        {@render foot('Utilities', 48)}
      </div>
      <div class="panel clip">
        <div class="body">
          {@render bigButton('paste', [['Paste', 32]], true)}
          {@render minis(['c1', 'c2', ''])}
          {@render minis(['tri', 'tri', ''])}
        </div>
        {@render foot('Clipboard', 63, false)}
      </div>
      <div class="panel view">
        <div class="body">{@render bigButton('base', [['Base', 29]], true)}</div>
        {@render foot('View', 31, true, true)}
      </div>
    </section>

    <div class="filetabs"></div>

    <main class="canvas">
      <svg class="sheet" width="1840" height="720" viewBox="0 0 1840 720">
        {#each vert as l}<path d="M{l.p} 0V720" stroke={l.major ? '#333b47' : '#272f39'} />{/each}
        {#each horz as l}<path d="M0 {l.p}H1840" stroke={l.major ? '#333b47' : '#272f39'} />{/each}
        <g stroke="#d9dbdd" fill="none" stroke-width="1.2">
          <path d="M849 147.500h43.500M898.500 147.500H942M895.500 102v42.500M895.500 150.500V194" />
          <rect x="892.500" y="144.500" width="6" height="6" />
          <path d="M19.500 641v59.500H79M14.500 694.500h11v11h-11zM21 622l7 8 7.500-8M28 630v7M83 685l15 14M98 685L83 699" stroke-width="1.4" />
        </g>
      </svg>

      <div class="docbtns">
        <svg width="62" height="12" viewBox="0 0 62 12">
          <path d="M0 9h13" stroke="#e3e5e8" stroke-width="4" />
          <path d="M25.500 4h7v6h-7z" fill="none" stroke="#e3e5e8" stroke-width="2.400" /><path d="M27 1h9v8" fill="none" stroke="#e3e5e8" stroke-width="1.600" />
          <path d="M49 1l9 9M58 1l-9 9" stroke="#e3e5e8" stroke-width="2.400" />
        </svg>
      </div>

      <div class="compass">
        <b class="n">N</b><b class="w">W</b><b class="e">E</b><b class="s">S</b>
        <div class="cube"><div>TOP</div></div>
      </div>
      <div class="wcs">WCS <i></i></div>

      <svg class="navbar" width="39" height="248" viewBox="0 0 39 248">
        <rect x=".5" y=".5" width="38" height="247" rx="3" fill="#5b6067" stroke="#757a81" />
        <g fill="none" stroke="#454a52" stroke-width="1.500">
          <circle cx="32" cy="6" r="3.500" /><path d="M30 4l4 4M34 4l-4 4" />
          <path d="M20 21h13v13a13 13 0 1 1-13-13z" /><circle cx="20" cy="34" r="7" /><path d="M15 39l-4 4M25 39l4 4" />
          <path d="M14 94q-3-7-8-10 2-3 7 2l-1-12q2-2 4 1l2 8V71q2-3 4 0v12l3-11q3-1 3 2l-1 10 3-6q3 0 2 3l-4 10q-2 6-4 6h-6z" />
          <path d="M6 104l19 19M25 104L6 123M6 109v-5h5M20 104h5v5M6 118v5h5" /><circle cx="25" cy="122" r="6" /><path d="M29 127l5 4" stroke-width="3" />
          <path d="M17 174v-18h-3l5-7 5 7h-3v18z" /><path d="M14 160q-9 2-8 5t13 4 13-5-9-5M15 166l-5 3 5 4" />
          <rect x="6" y="199" width="7" height="7" /><rect x="16" y="199" width="7" height="7" /><rect x="26" y="199" width="7" height="7" />
          <rect x="6" y="210" width="19" height="16" /><circle cx="32" cy="242" r="3.500" />
        </g>
        <path d="M12 213l8 5-8 5zM17 56h6l-3 4zM17 140h6l-3 4zM17 185h6l-3 4z" fill="#3c4148" />
      </svg>

      <div class="note">
        {#each note as [t, w]}<div><span use:fit={w}>{t}</span></div>{/each}
      </div>

      <div class="command">
        <div class="grip">
          <svg width="6" height="21" viewBox="0 0 6 21"><path d="M1 0v21M5 0v21" stroke="#c5c8cd" stroke-width="1.800" stroke-dasharray="1.800 2" /></svg>
          <svg width="11" height="11" viewBox="0 0 10 10"><path d="M1 1l8 8M9 1L1 9" stroke="#b3b5ba" stroke-width="2.400" /></svg>
          {@render ico('wrench')}
        </div>
        <div class="input">
          {@render ico('term')}<i class="down"></i><span use:fit={119}>Type a command</span><em></em><i class="upw"></i>
        </div>
      </div>
    </main>

    <div class="status">
      <div class="layouts">
        {@render ico('menu')}
        <div class="model"><span use:fit={41}>Model</span></div>
        <span use:fit={49}>Layout1</span>{@render ico('slash')}
        <span use:fit={49}>Layout2</span>{@render ico('slash')}
        {@render ico('plus')}{@render ico('slash')}
      </div>
      <div class="toggles">
        <div class="cell c-model"><span use:fit={49}>MODEL</span></div>
        <div class="cell on">{@render ico('grid')}</div>
        <div class="cell c-snap">{@render ico('dots')}{@render ico('big')}</div>
        <div class="cell on">{@render ico('dyn')}</div>
        <div class="cell">{@render ico('ortho')}</div>
        <div class="cell on">{@render ico('polar')}</div>
        <div class="cell c-polar">{@render ico('big')}{@render ico('iso')}{@render ico('big')}</div>
        <div class="cell on">{@render ico('track')}</div>
        <div class="cell on">{@render ico('osnap')}</div>
        <div class="cell">{@render ico('big')}</div>
        <div class="cell on">{@render ico('ann1')}</div>
        <div class="cell c-scale">{@render ico('ann2')}{@render ico('ann3')}<span use:fit={16.5}>1:1</span>{@render ico('big')}</div>
        <div class="cell c-gear">{@render ico('gear')}{@render ico('big')}</div>
        <div class="cell">{@render ico('plus')}</div>
        <div class="cell">{@render ico('shapes')}</div>
        <div class="cell c-gear">{@render ico('model')}{@render ico('bolt')}</div>
        <div class="cell">{@render ico('full')}</div>
        <div class="cell">{@render ico('menu')}</div>
      </div>
    </div>

    <div class="taskbar">
      <div class="weather">{@render ico('weather')}<b>3</b></div>
      <div class="temps"><span use:fit={30}>26°C</span><span class="dim-text" use:fit={38}>Kabut</span></div>
      <div class="start">{@render ico('win')}</div>
      <div class="find">{@render ico('find')}<span use:fit={28}>Cari</span>{@render ico('sparks')}</div>
      <div class="apps">
        <div class="appi">{@render ico('task')}</div>
        <div class="appi">{@render ico('teams')}</div>
        <div class="appi"><div class="zoom">zoom</div></div>
        <div class="appi">{@render ico('arc')}</div>
        <div class="appi">{@render ico('sketch')}</div>
        <div class="appi">{@render ico('notion')}</div>
        <div class="appi">{@render ico('chrome')}</div>
        <div class="appi run">{@render ico('chrome')}<b class="who">F</b></div>
        <div class="appi run active"><div class="cad"><b>A</b><small>CAD</small></div></div>
        <div class="appi run"><div class="abar">ā</div></div>
        <div class="appi run">{@render ico('obs')}</div>
        <div class="appi run">{@render ico('folder')}</div>
      </div>
      <div class="tray">
        {@render ico('up')}{@render ico('mic')}{@render ico('kb')}{@render ico('wifi')}{@render ico('vol')}{@render ico('batt')}
      </div>
      <div class="clock"><span use:fit={34}>13.01</span><span use:fit={74}>04/06/2025</span></div>
      {@render ico('bell')}
    </div>

    <aside class="steps">
      <div class="list">
        <div class="card current"><span>Tahap 1</span></div>
        <div class="card"><span>Tahap 2</span></div>
        <div class="card"></div>
      </div>
      <div class="scroll"><i></i></div>
      <div class="focus"></div>
    </aside>
  </div>

  <footer class="player">
    {@render ico('play')}
    <div class="handle"><i></i><i></i><i></i>
      <svg width="12" height="7" viewBox="0 0 12 7"><path d="M1 0h4L4 1.500l2 2 2-2L7 0h4v4L9.500 3l-2 3h-3l-2-3L1 4z" fill="#fff" /></svg>
    </div>
    <div class="track"><div></div></div>
    <div class="time"><span use:fit={34}>0:00</span><span class="total" use:fit={43}>/ 1:45</span></div>
    {@render ico('gauge')}
    {@render ico('sound')}
    {@render ico('cog')}
    {@render ico('shrink')}
  </footer>
</div>

<style>
  :global(body) { margin: 0; background: #000; overflow: hidden; }
  .screen { width: 1920px; height: 1080px; background: #000; display: flex; flex-direction: column; font: 14.500px/20px 'Open Sans', 'Noto Sans', sans-serif; color: #dfe1e4; }
  .screen :global(svg) { display: block; flex: none; }
  span { white-space: nowrap; display: inline-block; flex: none; }
  i, em, u { font-style: normal; text-decoration: none; display: block; }
  .app { position: relative; width: 1840px; height: 1035px; margin-left: 40px; background: #222832; display: flex; flex-direction: column; overflow: hidden; }

  .title { height: 35px; flex: none; padding-left: 379px; display: grid; align-items: center; justify-items: start;
    grid-template-columns: 24px 172px 173px 295px 12px 219px 28px 26.5px 101px 20.5px 27px 25.5px 18.5px 11px 29px 15px 119px 55px 56px 34px; }
  .share { color: #a5d3f5; }
  .bright { color: #f2f3f4; }
  .title .bright { margin-top: -1px; }
  .search { width: 214px; height: 25px; background: #464f63; font-style: italic; color: #b9bec8; line-height: 24px; }
  .search span { margin-left: 3px; }
  .rule { width: 1px; height: 21px; background: #4c535e; }
  .help { width: 20px; height: 20px; border-radius: 50%; background: #e2e2e2; color: #555; text-align: center; font-size: 15px; font-weight: 600; }

  .tabs { height: 27px; flex: none; padding-left: 363px; display: flex; align-items: center; gap: 23px; color: #a6abb3; }
  .tabs span { position: relative; top: 2px; }
  .toggle { width: 19px; height: 9px; background: #f4f4f4; margin: 4px -18px 0 13px; display: grid; place-items: center; }
  .toggle::after { content: ''; border: 3px solid transparent; border-top: 0; border-bottom: 3px solid #555; }
  .tabs > :global(svg) { margin-top: 4px; }

  .ribbon { height: 119px; flex: none; background: #3b4453; display: flex; }
  .panel { box-sizing: border-box; border-right: 1px solid #252d39; display: flex; flex-direction: column; flex: none; }
  .body { height: 98px; display: flex; padding-top: 5px; box-sizing: border-box; }
  .foot { height: 21px; display: flex; align-items: center; line-height: 21px; gap: 8px; }
  .foot > :global(svg) { margin-top: 2px; }
  .launch { margin-left: auto; padding-right: 5px; }
  .minis { display: grid; grid-template-rows: repeat(3, 29.700px); align-items: center; justify-items: center; }
  .mini { display: grid; place-items: center; width: 28px; height: 27px; box-sizing: border-box; margin: 0 -20px; }
  .mini.on { border: 1.500px solid #6db3ec; background: #35516f; }
  .bigbtn { display: flex; flex-direction: column; align-items: center; flex: none; }
  .pic { height: 42.500px; padding-top: 3px; box-sizing: content-box; display: flex; justify-content: center; }
  .line { height: 19.500px; line-height: 20px; display: flex; justify-content: center; }
  .bigbtn > :global(svg) { margin-top: 4px; }
  .letter .pic { font: 46px/40px 'Open Sans', sans-serif; color: #dcdde0; -webkit-text-stroke: 1px #dcdde0; }

  .modify { width: 478px; }
  .modify .body { padding-left: 393px; }
  .modify .minis:nth-child(1) { width: 24px; }
  .modify .minis:nth-child(2) { width: 21px; }
  .modify .minis:nth-child(3) { width: 33px; }
  .modify .foot { padding-left: 342px; gap: 7px; }
  .annotation { width: 176px; }
  .annotation .letter { width: 57px; }
  .annotation .dim { width: 68px; }
  .annotation .minis { width: 36px; }
  .annotation .minis:last-child { width: 8px; }
  .annotation .foot { padding-left: 44px; }
  .layers { width: 327px; }
  .layers .bigbtn { width: 75px; }
  .layers .foot { padding-left: 136px; }
  .layerside { padding-top: 1.500px; }
  .combo { box-sizing: border-box; width: 249px; height: 26px; background: #4a546a; border: 1px solid #2d3542; display: flex; align-items: center; padding: 0 2px 0 7px; line-height: 24px; }
  .combo em { flex: 1; }
  .layers .combo { padding-left: 5px; }
  .layers .combo :global(svg:nth-child(2)) { margin-left: 6px; }
  .layers .combo :global(svg:nth-child(3)) { margin: 0 6px 0 5px; }
  .red { width: 15px; height: 15px; background: #f00; border: 1px solid #f5dede; margin-right: 6px; }
  .layers .red { margin-right: 5px; }
  .tools { display: grid; grid-template-columns: repeat(5, 28.700px); grid-template-rows: 29.700px 29.700px; align-items: center; padding: 1.500px 0 0 3px; }
  .block { width: 191.500px; }
  .block .insert { width: 51px; }
  .block .insert .pic { padding-top: 1px; height: 43.500px; }
  .block .detect { width: 69px; margin-left: 11px; }
  .block .detect .pic, .utils .pic, .clip .pic, .view .pic { height: 43.500px; }
  .utils .bigbtn > :global(svg), .clip .bigbtn > :global(svg), .view .bigbtn > :global(svg) { margin-top: 3px; }
  .clip .pic { padding-top: 4px; }
  .view .pic { padding-top: 6px; height: 40.500px; }
  .side-arrow { width: 13px; padding: 65px 0 0 4px; box-sizing: border-box; }
  .block .minis { width: 28px; }
  .block .minis:last-child { width: 17px; }
  .block .foot { padding-left: 70px; }
  .props { width: 265.500px; }
  .props .bigbtn { width: 75px; }
  .props .minis { width: 21px; }
  .combos { display: flex; flex-direction: column; gap: 3.600px; padding: 1.500px 0 0 3px; }
  .combos .combo { width: 163px; }
  .combos u { width: 77px; height: 1.500px; background: #dcdde0; margin-right: 2px; }
  .combos .dash { background: linear-gradient(90deg, #dcdde0 27px, transparent 27px 40px, #dcdde0 40px 67px, transparent 67px); }
  .props .foot { padding-left: 84px; }
  .groups { width: 81.500px; }
  .groups .bigbtn { width: 49px; }
  .groups .minis { width: 28px; }
  .groups .foot { padding-left: 10px; gap: 7px; }
  .utils { width: 116px; }
  .utils .bigbtn { width: 86px; }
  .utils .minis { width: 22px; }
  .utils .foot { padding-left: 25.500px; gap: 7px; }
  .clip { width: 108px; }
  .clip .bigbtn { width: 64px; }
  .clip .minis { width: 24px; }
  .clip .minis:last-child { width: 15px; }
  .clip .foot { padding-left: 22px; }
  .view { width: 95.500px; border: 0; }
  .view .bigbtn { width: 78px; }
  .view .foot { padding-left: 6.500px; gap: 7px; }
  .view .launch { margin-left: 3px; }

  .filetabs { height: 32px; flex: none; border-bottom: 5px solid #3b4453; }

  .canvas { position: relative; height: 720px; flex: none; background: #212830; overflow: hidden; }
  .docbtns { position: absolute; right: 10px; top: 11px; }
  .compass { position: absolute; left: 1694.500px; top: 50px; width: 96px; height: 96px; border: 13px solid #464e58; border-radius: 50%; font: bold 21px/22px 'Liberation Sans', sans-serif; color: #a9adb1; }
  .compass b { position: absolute; width: 22px; text-align: center; }
  .compass .n { left: 37px; top: -19px; }
  .compass .s { left: 37px; top: 94px; }
  .compass .w { left: -20px; top: 37px; }
  .compass .e { left: 94px; top: 37px; }
  .cube { position: absolute; left: 21px; top: 21px; width: 53px; height: 53px; box-sizing: border-box; padding: 10px; background: #b7b8b8; }
  .cube div { height: 33px; background: #adaeb4; color: #4d5056; font: bold 15px/33px 'Open Sans', sans-serif; letter-spacing: -.8px; text-align: center; transform: scaleX(.8); }
  .wcs { position: absolute; left: 1728.500px; top: 199px; width: 54px; height: 20px; box-sizing: border-box; border: 1px solid #aeb1b9; border-radius: 5px; background: #9497a1; color: #5f626b; font: 12px/17px 'Liberation Sans', sans-serif; padding-left: 3px; display: flex; gap: 7px; align-items: center; -webkit-text-stroke: .3px #5f626b; }
  .wcs i { border: 4px solid transparent; border-bottom: 0; border-top: 4px solid #b9bcc4; }
  .navbar { position: absolute; left: 1799px; top: 247.500px; }
  .note { position: absolute; left: 1244px; top: 421.500px; width: 500px; text-align: center; font: 700 34px/42.200px Inter, sans-serif; color: #fff; }
  .note div { display: flex; justify-content: center; }
  .note div:last-child { padding-right: 8px; }
  .command { position: absolute; left: 388px; top: 689px; display: flex; }
  .grip { width: 68px; height: 31px; background: #282e39; display: flex; align-items: center; padding: 0 0 2px 4px; box-sizing: border-box; }
  .grip :global(svg:nth-child(2)) { margin: 0 14px 0 8px; }
  .input { width: 996px; height: 30px; background: #bdbec1; display: flex; align-items: center; border-radius: 2px; box-sizing: border-box; padding: 0 6px 0 5px; color: #66686d; font: italic 15px/30px 'DejaVu Sans Mono', monospace; }
  .input span { margin-top: 2px; }
  .down { border: 5px solid transparent; border-bottom: 0; border-top: 5px solid #55585d; margin: 0 8px 0 1px; }
  .upw { border: 5px solid transparent; border-top: 0; border-bottom: 5px solid #55585d; }
  .input em { flex: 1; }

  .status { height: 39px; flex: none; background: #222935; border-top: 5px solid #3b4453; box-sizing: border-box; border-bottom: 1px solid #161b24; display: flex; justify-content: space-between; }
  .layouts { display: flex; align-items: center; padding: 0 0 4px 19px; color: #d7dade; }
  .model { width: 82px; height: 29px; margin: 0 9.500px 0 9.500px; background: #3b4453; clip-path: polygon(11px 0, 100% 0, 71px 100%, 0 100%); color: #fff; font-weight: 700; line-height: 29px; }
  .model span { margin-left: 21px; }
  .layouts > :global(svg:nth-of-type(2)) { margin: 0 10px 0 11px; }
  .layouts > :global(svg:nth-of-type(3)) { margin: 0 12.500px 0 10px; }
  .layouts > :global(svg:nth-of-type(4)) { margin-right: 12px; }
  .toggles { display: grid; padding-top: 2px; padding-right: 1.500px; column-gap: 2px; grid-template-rows: 28.500px;
    grid-template-columns: 58.5px 26.5px 49px 27px 27.5px 26.5px 66px 27px 26.5px 20px 27px 97.5px 47px 30px 31px 59.5px 29px 29px; }
  .cell { background: #3b4453; display: flex; align-items: center; justify-content: center; }
  .cell.on { background: #5b8fc4; }
  .c-snap { gap: 10px; }
  .c-polar { gap: 11px; }
  .c-scale { gap: 9px; }
  .c-scale :global(svg:last-child) { margin-left: -4px; }
  .c-gear { gap: 10px; }

  .taskbar { height: 58px; flex: none; background: linear-gradient(90deg, #f9e3d6 0, #f9e2d3 24%, #e8d8d9 42%, #ecdbd8 52%, #fae2d5 70%, #fbe4d6 100%); display: flex; align-items: center; color: #2b2523; box-sizing: border-box; }
  .weather { position: relative; margin-left: 23px; width: 30px; }
  .weather b { position: absolute; left: 14px; top: -6px; width: 19px; height: 19px; border-radius: 50%; background: #c0291d; color: #fff; font: 600 13px/19px 'Open Sans', sans-serif; text-align: center; }
  .temps { display: flex; flex-direction: column; align-items: flex-start; margin-left: 8px; line-height: 19px; width: 40px; }
  .dim-text { color: #75655e; }
  .start { margin: 2px 0 0 354px; }
  .find { width: 262px; height: 37px; box-sizing: border-box; margin: 1px 0 0 16.500px; border-radius: 19px; background: #faf5f2; border: 1px solid #dccfc8; display: flex; align-items: center; padding: 0 9px 0 13px; color: #5c5856; font-size: 16px; }
  .find span { margin-left: 12px; }
  .find :global(svg:last-child) { margin-left: auto; }
  .apps { display: grid; grid-template-columns: repeat(12, 52.800px); margin: 1px 0 0 2.500px; }
  .appi { position: relative; height: 46px; display: grid; place-items: center; width: 46px; margin: 0 auto; border-radius: 5px; }
  .appi.active { background: #fdf1ea; }
  .run::after { content: ''; position: absolute; bottom: 0; left: 19px; width: 8px; height: 4px; border-radius: 2px; background: #94827a; }
  .run.active::after { left: 14px; width: 18px; background: #5b7d88; }
  .zoom { width: 29px; height: 29px; border-radius: 11px; background: #0b5cff; color: #fff; font: 700 9px/27px 'Open Sans', sans-serif; text-align: center; letter-spacing: -.2px; }
  .who { position: absolute; left: 24px; top: 3px; width: 19px; height: 19px; border-radius: 50%; background: #6e8a96; color: #dbe4e8; font: 12px/19px 'Open Sans', sans-serif; text-align: center; }
  .cad { width: 26px; height: 29px; background: linear-gradient(#e01552 20px, #7c0f32 20px); border-left: 3px solid #b01043; color: #fff; text-align: center; display: flex; flex-direction: column; box-sizing: border-box; border-radius: 2px; }
  .cad b { font: 800 16px/20px 'Open Sans', sans-serif; }
  .cad small { font: 700 7px/8px 'Open Sans', sans-serif; letter-spacing: .4px; }
  .abar { width: 28px; height: 28px; border-radius: 2px; background: linear-gradient(135deg, #3aa6d0, #6b6fd6 50%, #23a79c); color: #fff; font: 700 25px/26px 'Open Sans', sans-serif; text-align: center; }
  .tray { display: grid; grid-template-columns: 38px 38px 40px 36px 20px 39px; justify-items: center; align-items: center; margin-left: 95px; }
  .clock { display: flex; flex-direction: column; align-items: flex-end; line-height: 19px; width: 74px; margin: 0 10px 0 9.500px; font-size: 14px; }

  .steps { position: absolute; left: 0; top: 0; width: 379px; height: 274px; background: #fff; display: flex; overflow: hidden; }
  .list { width: 356px; height: 274px; box-sizing: border-box; border-top: 3px solid #009088; background: #f4f4f4; padding: 10px; display: flex; flex-direction: column; gap: 10px; }
  .card { box-sizing: border-box; width: 336px; height: 108px; flex: none; border: 5px solid #fff; border-bottom-color: #d9d9d9; border-radius: 20px; background: #fff; background-clip: padding-box; text-align: center; font: 40px/96px 'Liberation Sans', sans-serif; color: #2b2b2b; overflow: hidden; }
  .current { color: #009088; background: linear-gradient(#fff 93px, #009088 93px) padding-box; }
  .scroll { width: 23px; padding-top: 61px; }
  .scroll i { height: 111px; background: #dcdcdc; }
  .focus { position: absolute; left: 10px; top: 7px; width: 329px; height: 110px; border: 5px solid #e81a1a; }

  .player { height: 45px; background: #2b2b2b; display: flex; align-items: center; padding-left: 21px; }
  .handle { position: relative; width: 21px; height: 20px; margin: 2px 0 0 15.500px; border-radius: 3px; background: #fff; display: flex; justify-content: center; align-items: center; gap: 3px; }
  .handle i { width: 2px; height: 11px; background: #bdb5c4; }
  .handle svg { position: absolute; left: 4px; top: -7px; }
  .track { width: 1508px; height: 5px; background: #0c0d0d; }
  .track div { width: 234px; height: 5px; background: #4d4d4d; }
  .time { display: flex; gap: 6px; margin: -2px 0 0 20px; width: 83px; font: 17.500px/20px 'Liberation Sans', sans-serif; color: #fff; }
  .total { color: #8a8a8a; }
  .player > :global(svg:nth-of-type(2)) { margin-left: 25px; margin-top: 3px; }
  .player > :global(svg:nth-of-type(3)) { margin-left: 25px; margin-top: 1px; }
  .player > :global(svg:nth-of-type(4)) { margin-left: 26px; }
  .player > :global(svg:nth-of-type(5)) { margin-left: 27px; }
</style>
